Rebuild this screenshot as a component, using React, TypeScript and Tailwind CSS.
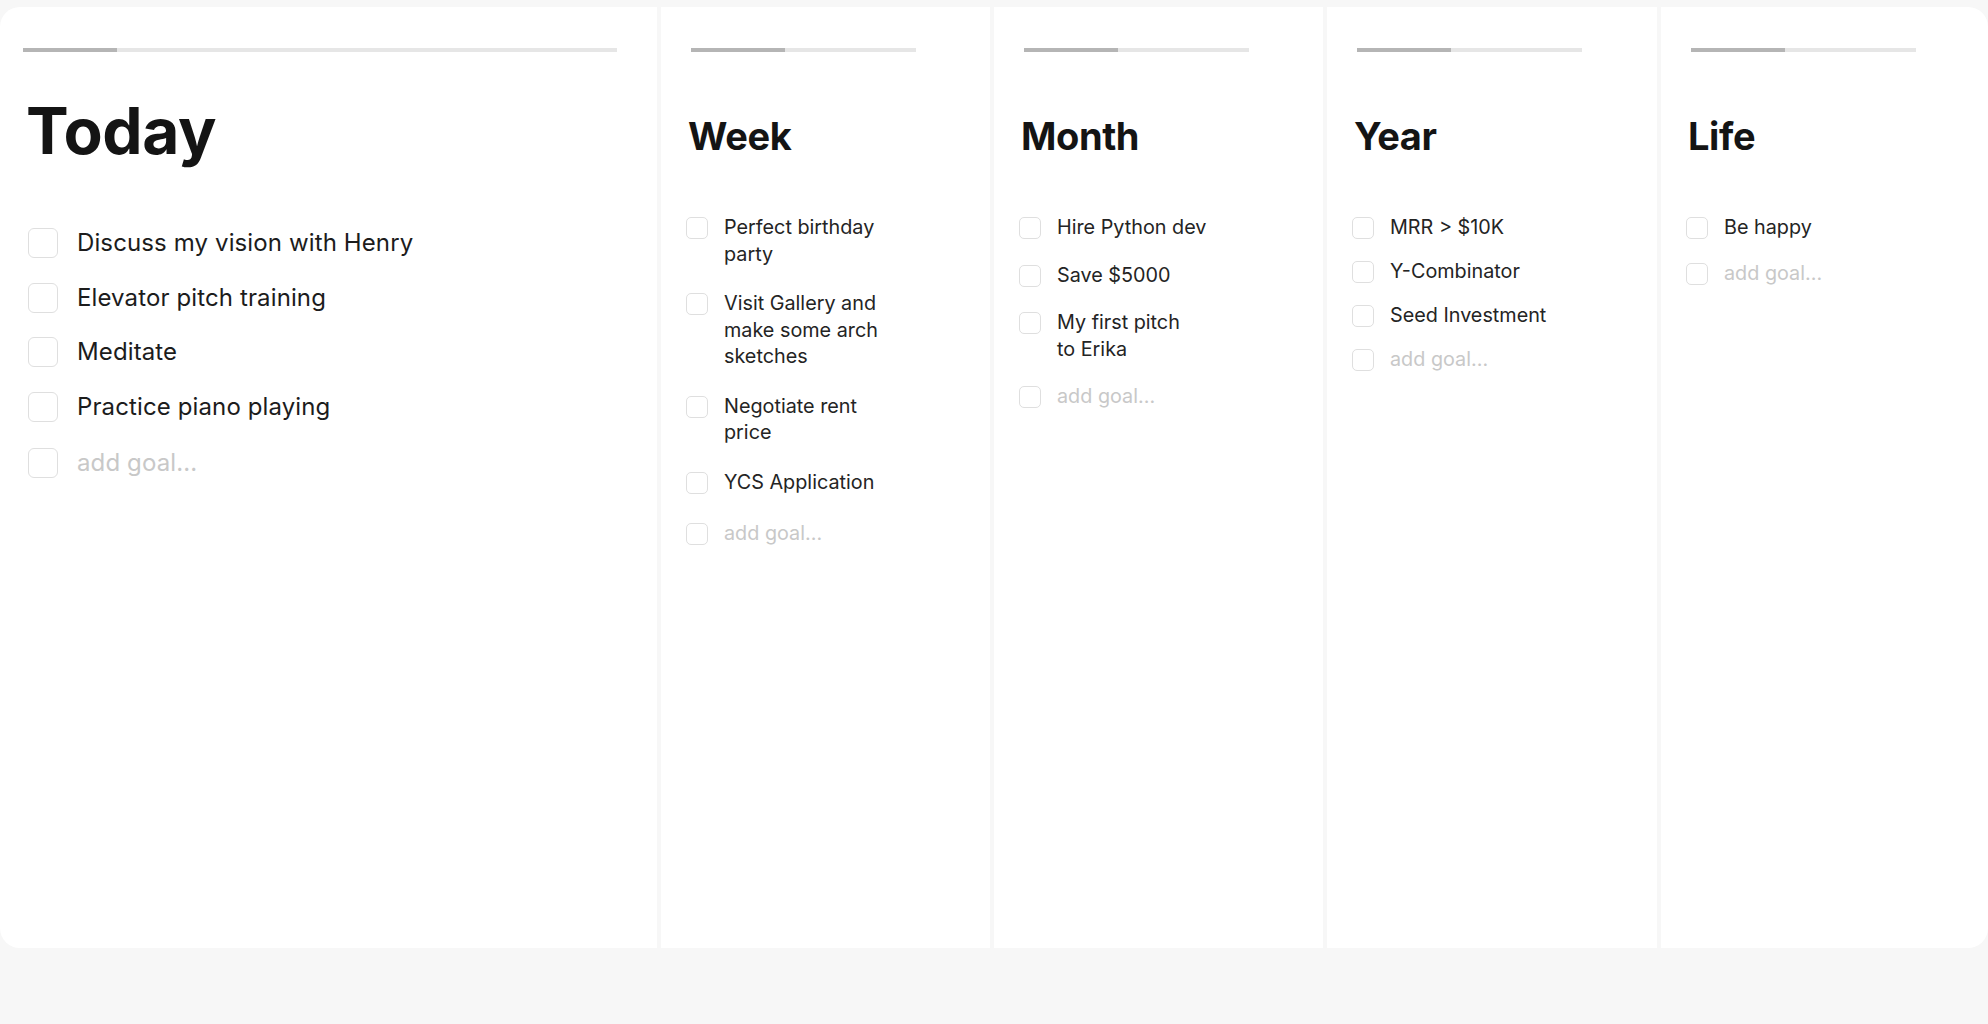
const goals = {
  week: [['Perfect birthday', 'party'], ['Visit Gallery and', 'make some arch', 'sketches'], ['Negotiate rent', 'price'], ['YCS Application']],
  month: [['Hire Python dev'], ['Save $5000'], ['My first pitch', 'to Erika']],
  year: [['MRR > $10K'], ['Y-Combinator'], ['Seed Investment']],
  life: [['Be happy']],
};

const todayGoals = ['Discuss my vision with Henry', 'Elevator pitch training', 'Meditate', 'Practice piano playing'];

function ProgressBar({ className }: { className: string }) {
  return (
    <div className={`flex h-[4px] bg-[#e6e6e6] ${className}`}>
      <div className="h-full w-[94px] bg-[#b5b5b5]" />
    </div>
  );
}

function SmallColumn({ title, items, gap, addGap }: { title: string; items: string[][]; gap: string; addGap: string }) {
  return (
    <div className="flex h-full flex-col bg-white pl-[25px] pt-[41px]">
      <ProgressBar className="ml-[5px] w-[225px]" />
      <h2 className="ml-[2px] mt-[65px] text-[38px] font-bold leading-none tracking-[-0.01em] text-[#141414]">{title}</h2>
      <ul className={`mt-[59px] flex flex-col ${gap}`}>
        {items.map((lines) => (
          <li key={lines.join(' ')} className="flex items-start gap-[16px]">
            <span className="mt-[3px] h-[22px] w-[22px] shrink-0 rounded-[5px] border border-[#dfdfdf] bg-white" />
            <span className="text-[19.8px] leading-[26.5px] text-[#242424]">
              {lines.map((line) => (
                <span key={line} className="block whitespace-nowrap">
                  {line}
                </span>
              ))}
            </span>
          </li>
        ))}
        <li className={`flex items-start gap-[16px] ${addGap}`}>
          <span className="mt-[3px] h-[22px] w-[22px] shrink-0 rounded-[5px] border border-[#dfdfdf] bg-white" />
          <span className="text-[19.8px] leading-[26.5px] text-[#c8c8c8]">add goal...</span>
        </li>
      </ul>
    </div>
  );
}

export default function App() {
  return (
    <div className="min-h-screen bg-[#f7f7f7] pt-[7px]" style={{ fontFamily: 'Inter, "Noto Sans", sans-serif' }}>
      <div className="flex h-[941px] gap-[4px] overflow-hidden rounded-[20px]">
        <div className="flex w-[657px] shrink-0 flex-col bg-white pt-[41px]">
          <ProgressBar className="ml-[23px] w-[594px]" />
          <h1 className="ml-[26px] mt-[47px] text-[64px] font-bold leading-none tracking-[-0.005em] text-[#141414]">Today</h1>
          <ul className="ml-[28px] mt-[64px] flex flex-col gap-[22.5px]">
            {todayGoals.map((goal) => (
              <li key={goal} className="flex items-center gap-[19px]">
                <span className="h-[30px] w-[30px] shrink-0 rounded-[6px] border border-[#dfdfdf] bg-white" />
                <span className="text-[24px] leading-[32px] tracking-[0.005em] text-[#1c1c1c]">{goal}</span>
              </li>
            ))}
            <li className="mt-[2px] flex items-center gap-[19px]">
              <span className="h-[30px] w-[30px] shrink-0 rounded-[6px] border border-[#dfdfdf] bg-white" />
              <span className="text-[24px] leading-[32px] tracking-[0.005em] text-[#c8c8c8]">add goal...</span>
            </li>
          </ul>
        </div>
        <div className="w-[329px] shrink-0">
          <SmallColumn title="Week" items={goals.week} gap="gap-[23px]" addGap="mt-[2px]" />
        </div>
        <div className="w-[329px] shrink-0">
          <SmallColumn title="Month" items={goals.month} gap="gap-[21px]" addGap="mt-0" />
        </div>
        <div className="w-[330px] shrink-0">
          <SmallColumn title="Year" items={goals.year} gap="gap-[17.5px]" addGap="mt-0" />
        </div>
        <div className="flex-1">
          <SmallColumn title="Life" items={goals.life} gap="gap-[19px]" addGap="mt-0" />
        </div>
      </div>
    </div>
  );
}
